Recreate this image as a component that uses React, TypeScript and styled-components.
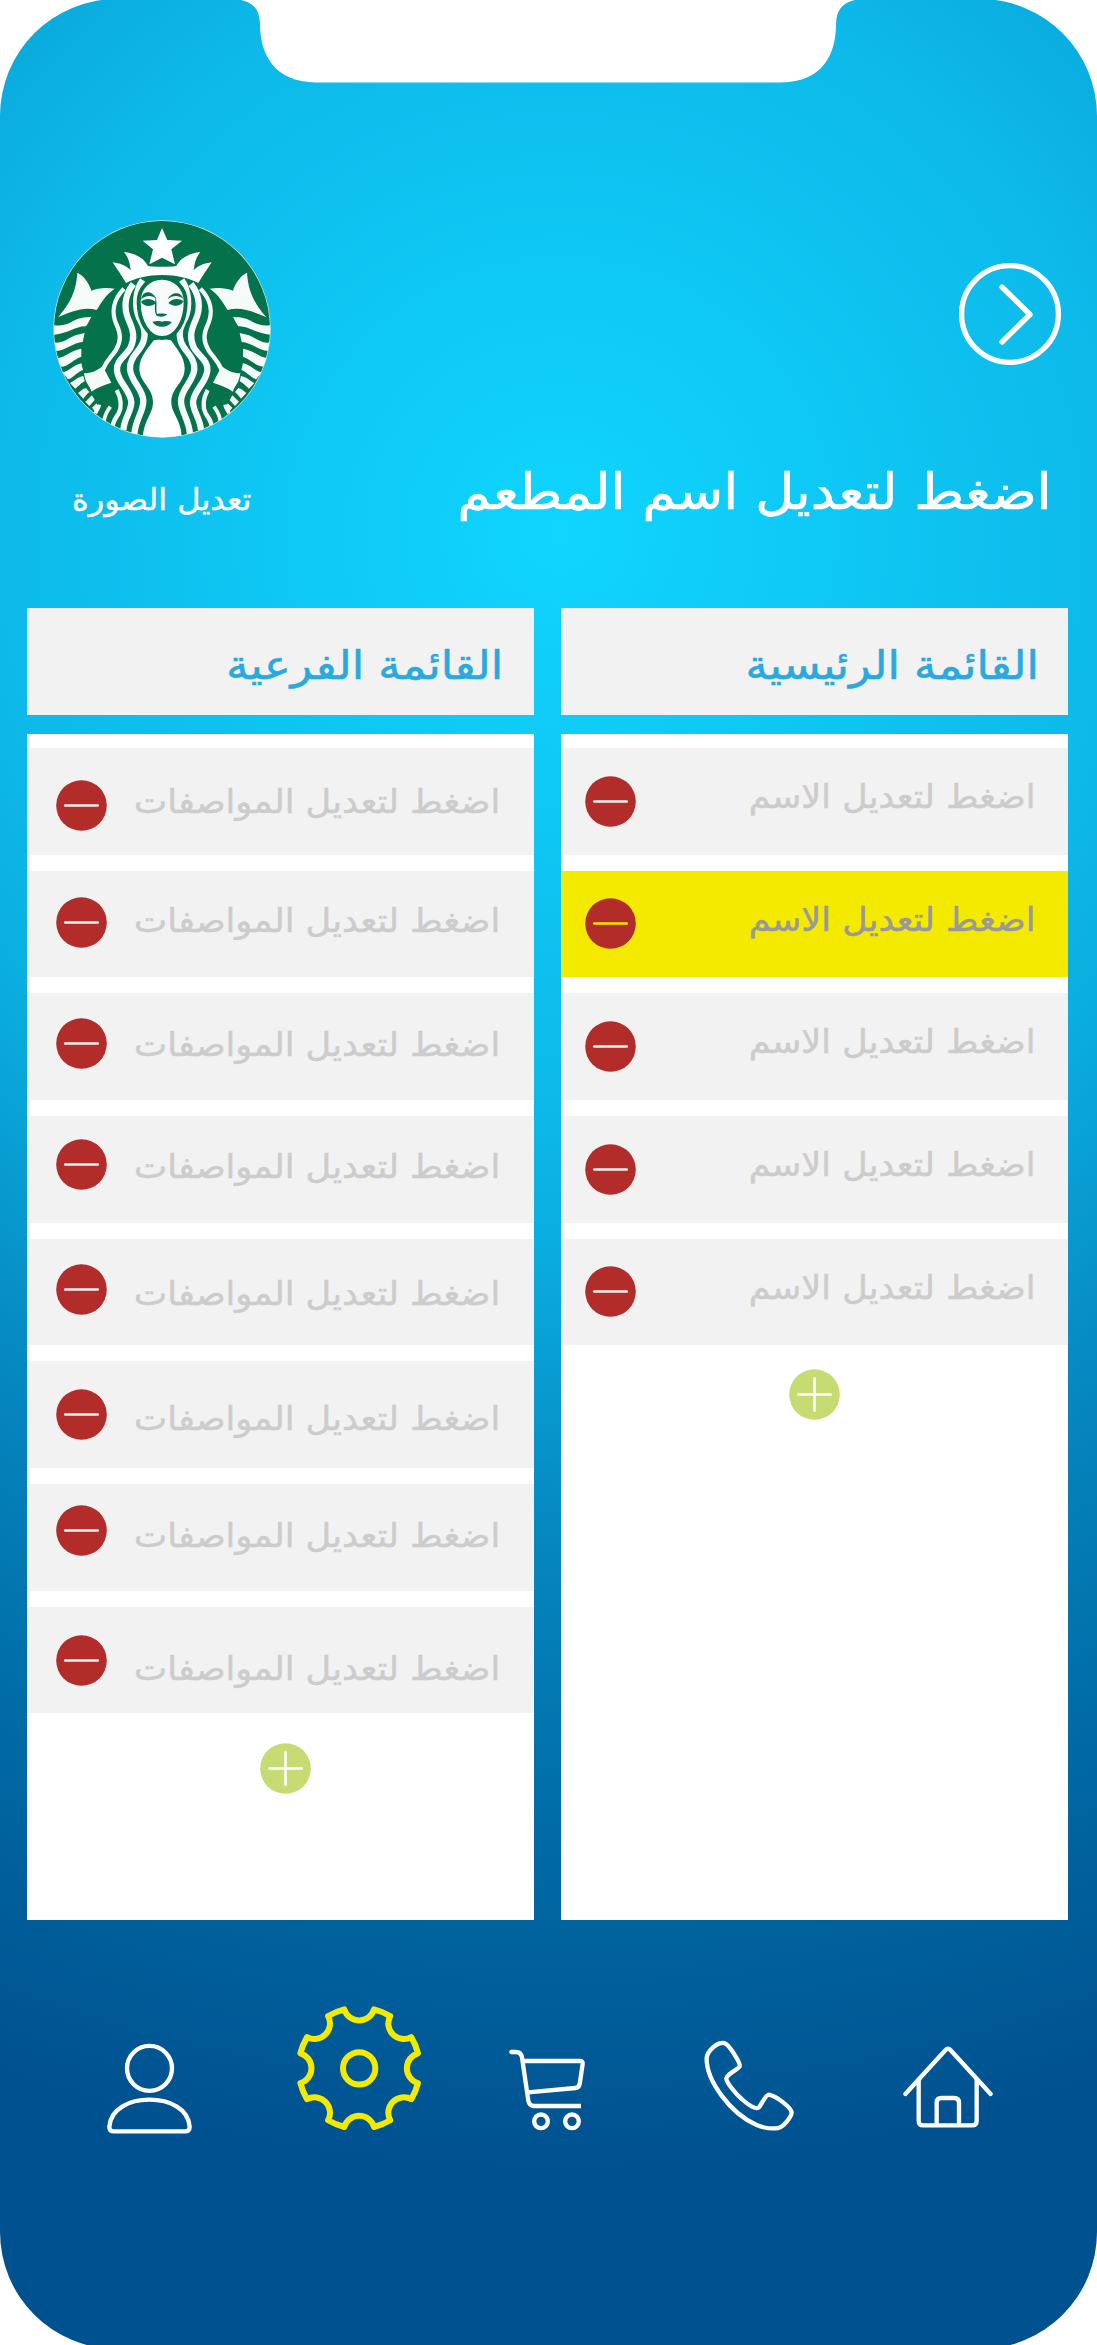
import React from "react";
import styled, { createGlobalStyle } from "styled-components";

const GlobalStyle = createGlobalStyle`
  *, *::before, *::after { box-sizing: border-box; }
  body { margin: 0; background: #fff; font-family: "DejaVu Sans", sans-serif; }
`;

const Screen = styled.main`
  width: 1097px;
  height: 2345px;
  overflow: hidden;
`;

const Phone = styled.div`
  position: relative;
  display: flex;
  flex-direction: column;
  width: 1097px;
  height: 2350px;
  margin-top: -1px;
  padding-top: 1px;
  border-radius: 117px;
  overflow: hidden;
  background: radial-gradient(
    circle 1640px at 560px 535px,
    #10d5ff 0%,
    #0db9e9 35%,
    #0aacde 44%,
    #0689c2 60%,
    #006aa4 80%,
    #00518f 100%
  );
`;

const Notch = styled.svg`
  position: absolute;
  top: 1px;
  left: 240px;
  width: 616px;
  height: 84px;
`;

const Header = styled.header`
  display: flex;
  justify-content: space-between;
  height: 608px;
  padding: 220px 36px 0 52px;
`;

const Profile = styled.div`
  display: flex;
  flex-direction: column;
  align-items: flex-end;
  width: 219px;
`;

const Heading = styled.div`
  display: flex;
  flex-direction: column;
  align-items: flex-end;
  padding-top: 43px;
`;

const TextBox = styled.div<{ $size: number; $right?: number; $top?: number; $color: string }>`
  direction: rtl;
  height: 60px;
  line-height: 60px;
  white-space: nowrap;
  font-size: ${(p) => p.$size}px;
  color: ${(p) => p.$color};
  -webkit-text-stroke: ${(p) => p.$size * 0.014}px ${(p) => p.$color};
  margin-right: ${(p) => p.$right ?? 0}px;
  margin-top: ${(p) => p.$top ?? 0}px;
`;

const Scaled = styled.span<{ $x: number }>`
  display: inline-block;
  transform: scaleX(${(p) => p.$x});
  transform-origin: right center;
`;

const Columns = styled.section`
  display: grid;
  grid-template-columns: 507px 507px;
  column-gap: 27px;
  padding-left: 27px;
`;

const Column = styled.div`
  display: flex;
  flex-direction: column;
  gap: 19px;
`;

const ColumnTitle = styled.h2`
  display: flex;
  justify-content: flex-end;
  height: 107px;
  margin: 0;
  font-weight: 400;
  background: #f2f2f2;
`;

const List = styled.div`
  display: flex;
  flex-direction: column;
  gap: 16.2px;
  height: 1185.5px;
  padding-top: 14px;
  background: #fff;
`;

const Row = styled.div<{ $active?: boolean }>`
  display: flex;
  justify-content: space-between;
  flex: none;
  height: 106.5px;
  background: ${(p) => (p.$active ? "#f4ea00" : "#f2f2f2")};
`;

const Badge = styled.svg<{ $left: number; $top: number }>`
  display: block;
  flex: none;
  width: 51px;
  height: 51px;
  margin: ${(p) => p.$top}px 0 0 ${(p) => p.$left}px;
`;

const Nav = styled.nav`
  display: flex;
  align-items: flex-start;
  padding: 85.5px 0 0 106px;
`;

const NavIcon = styled.svg<{ $w: number; $h: number; $top: number; $gap?: number; $active?: boolean }>`
  display: block;
  width: ${(p) => p.$w}px;
  height: ${(p) => p.$h}px;
  margin: ${(p) => p.$top}px ${(p) => p.$gap ?? 0}px 0 0;
  fill: none;
  stroke: ${(p) => (p.$active ? "#f4ea00" : "#fff")};
  stroke-width: ${(p) => (p.$active ? 18 : 13)};
  stroke-linejoin: round;
`;

type LabelProps = { text: string; size: number; x: number; color: string; right?: number; top?: number };

const Label = ({ text, size, x, color, right, top }: LabelProps) => (
  <TextBox $size={size} $color={color} $right={right} $top={top}>
    <Scaled $x={x}>{text}</Scaled>
  </TextBox>
);

const Minus = ({ left, top, line }: { left: number; top: number; line: string }) => (
  <Badge $left={left} $top={top} viewBox="0 0 51 51">
    <circle cx="25.5" cy="25.5" r="25.3" fill="#b22c2a" />
    <path d="M9.3 25.5H41.7" stroke={line} strokeWidth="2.6" strokeLinecap="round" />
  </Badge>
);

const Plus = ({ left, top }: { left: number; top: number }) => (
  <Badge $left={left} $top={top} viewBox="0 0 51 51">
    <circle cx="25.5" cy="25.5" r="25.3" fill="#c6dc73" />
    <path d="M9.3 25.5H41.7M25.5 9.3V41.7" stroke="#fff" strokeWidth="2.6" strokeLinecap="round" />
  </Badge>
);

const gearPath = () => {
  const cx = 837.5;
  const cy = 264.5;
  const at = (deg: number) => {
    const a = (deg * Math.PI) / 180;
    return `${(cx + 182 * Math.sin(a)).toFixed(1)} ${(cy - 182 * Math.cos(a)).toFixed(1)}`;
  };
  let d = `M${at(-14.2)}`;
  for (let k = 0; k < 8; k++) {
    d += `A46.5 46.5 0 0 0 ${at(k * 45 + 14.2)}A182 182 0 0 1 ${at(k * 45 + 30.8)}`;
  }
  return d + "Z";
};

const LogoHalf = () => (
  <g>
    <path fill="#fff" d="M216 157C236 160 256 165 270 181C268 160 262 140 250 126C282 130 308 142 322 168Q343 171 365 170V195C320 195 285 204 256 219C244 198 228 176 216 157Z" />
    <g fill="none" stroke="#f4fbf9" strokeWidth="19">
      <path d="M306 210C285 240 280 290 296 325C312 355 316 370 308 395C298 425 266 440 268 478C271 515 306 535 308 572C309 605 285 625 281 672" />
      <path d="M278 222C252 255 248 295 264 330C280 365 282 385 270 412C255 440 226 450 229 482C233 520 270 540 272 577C272 605 250 625 248 660" />
      <path strokeWidth="13" d="M250 236C216 270 212 310 228 345C242 375 240 395 226 420C212 442 198 450 186 480" />
      <path strokeWidth="13" d="M228 540C244 570 244 590 234 610C222 628 217 635 216 650" />
    </g>
    <path fill="none" stroke="#f4fbf9" strokeWidth="11" d="M209 590C202 600 192 612 190 634M176 584C174 596 168 600 164 610" />
    <g fill="#f4fbf9">
      <path d="M52 322C78 290 106 256 110 188C128 195 146 220 152 242C172 234 196 232 222 236C194 254 180 282 168 300C130 288 88 306 52 322Z" />
      <path d="M38 345C66 350 82 342 102 331C120 321 138 322 152 320C145 334 141 342 136 349C108 347 84 370 40 374Z" />
      <path d="M41 397C66 402 80 386 104 376L132 369L126 396C98 397 75 422 47 423Z" />
      <path d="M50 444C76 442 86 422 122 416V440C100 446 84 470 61 470Z" />
      <path d="M66 487C86 484 96 466 122 460L127 480C112 484 96 505 82 508Z" />
      <path d="M88 519C100 514 112 500 128 498L132 514C122 518 110 532 104 536Z" />
      <path d="M112 549C120 544 126 536 136 534L146 546C138 552 132 562 128 566Z" />
      <path d="M130 490C152 490 170 482 186 468L212 518C192 524 170 532 152 545C148 528 134 522 130 490Z" />
      <path d="M134 575L154 556L162 570L146 588Z" />
      <path d="M154 593L168 580L174 596L164 606Z" />
    </g>
  </g>
);

const LogoSvg = styled.svg`
  display: block;
  width: 218px;
  height: 218px;
`;

const Logo = () => (
  <LogoSvg viewBox="37 30 654 654">
    <clipPath id="disc"><circle cx="364" cy="357" r="325" /></clipPath>
    <circle cx="364" cy="357" r="326" fill="#d7e2cf" />
    <g clipPath="url(#disc)">
      <circle cx="364" cy="357" r="324" fill="#04724a" />
      <LogoHalf />
      <g transform="translate(729 0) scale(-1 1)"><LogoHalf /></g>
      <path fill="#04724a" d="M327 169Q344 148 365 148Q385 148 400 169Q364 166 327 169Z" />
      <path fill="#fff" d="M364 54L380 90L424 92L392 118L403 163L364 143L326 163L337 118L306 92L349 90Z" />
      <path fill="#fff" d="M338 392C348 386 384 386 392 392C405 412 432 440 432 475C432 520 392 532 392 577C392 612 425 630 423 690H306C308 630 337 612 337 577C337 532 296 518 296 475C296 440 325 412 338 392Z" />
      <path fill="#f7fcfa" stroke="#04724a" strokeWidth="12" d="M364 203C326 203 294 232 294 276C294 334 323 384 364 384C407 384 435 334 435 276C435 232 402 203 364 203Z" />
      <g fill="#04724a">
        <path d="M301 268C306 242 334 238 348 268C334 255 318 255 301 268Z" />
        <path d="M381 268C394 242 422 246 428 266C414 256 396 255 381 268Z" />
        <path d="M301 276C314 262 336 266 347 279C332 291 312 292 301 276Z" />
        <path d="M383 279C394 266 412 262 429 274C418 291 398 291 383 279Z" />
        <path d="M345 262C350 280 345 300 349 312C357 310 371 310 380 313C374 321 354 323 347 316C340 304 343 280 345 262Z" />
        <path d="M335 335C346 335 354 331 364 335C374 331 382 335 393 335C384 354 346 356 335 335Z" />
      </g>
    </g>
  </LogoSvg>
);

const BackButton = styled.svg`
  display: block;
  width: 102px;
  height: 102px;
  fill: none;
  stroke: #fff;
  stroke-width: 5.3;
  stroke-linecap: round;
  stroke-linejoin: round;
`;

const FIRST_ROW = 748;
const ROW_PITCH = 122.7;

const mainItems = [0, 1, 2, 3, 4];
const subItems = [
  { badge: 805.3, base: 814 },
  { badge: 922.7, base: 933 },
  { badge: 1044, base: 1057.5 },
  { badge: 1165, base: 1179 },
  { badge: 1289.5, base: 1306 },
  { badge: 1414.5, base: 1431.5 },
  { badge: 1530.5, base: 1548 },
  { badge: 1660.3, base: 1680.7 },
];

export default function App() {
  return (
    <Screen>
      <GlobalStyle />
      <Phone>
        <Notch viewBox="240 0 616 84">
          <path fill="#fff" d="M241 0C254 3 259.500 10 260 24C260 54 274 82 316 82.500H781C823 82 836 54 836 24C836.500 10 842 3 855 0Z" />
        </Notch>
        <Header>
          <Profile>
            <Logo />
            <Label text="تعديل الصورة" size={30} x={1.065} color="#fff" right={20} top={32} />
          </Profile>
          <Heading>
            <BackButton viewBox="0 0 102 102">
              <circle cx="51" cy="51" r="48.4" />
              <path d="M43 24L71 51.500L43 79" />
            </BackButton>
            <Label text="اضغط لتعديل اسم المطعم" size={50} x={1.073} color="#fff" right={9} top={97} />
          </Heading>
        </Header>
        <Columns>
          <Column>
            <ColumnTitle><Label text="القائمة الفرعية" size={40} x={1.12} color="#29a9e1" right={31} top={27} /></ColumnTitle>
            <List>
              {subItems.map((it, k) => {
                const y = FIRST_ROW + ROW_PITCH * k;
                return (
                  <Row key={k}>
                    <Minus left={29} top={it.badge - y - 25.5} line="#f2f2f2" />
                    <Label text="اضغط لتعديل المواصفات" size={33} x={1.067} color="#ccc" right={34} top={it.base - y - 42} />
                  </Row>
                );
              })}
              <Plus left={233} top={13.5} />
            </List>
          </Column>
          <Column>
            <ColumnTitle><Label text="القائمة الرئيسية" size={40} x={1.12} color="#29a9e1" right={29} top={27} /></ColumnTitle>
            <List>
              {mainItems.map((k) => (
                <Row key={k} $active={k === 1}>
                  <Minus left={24} top={27.5} line={k === 1 ? "#f4ea00" : "#f2f2f2"} />
                  <Label text="اضغط لتعديل الاسم" size={33} x={1.06} color={k === 1 ? "#999" : "#ccc"} right={33} top={19} />
                </Row>
              ))}
              <Plus left={228} top={8} />
            </List>
          </Column>
        </Columns>
        <Nav>
          <NavIcon $w={88} $h={93} $top={37} $gap={102} viewBox="78 186 264 279">
            <circle cx="208.5" cy="265" r="67.5" />
            <path d="M102 454Q88 454 88 440C92 385 150 359 208 359C268 359 325 385 329 440Q329 454 315 454Z" />
          </NavIcon>
          <NavIcon $w={126} $h={127} $top={0} $gap={86} $active viewBox="648 75 378 381">
            <path d={gearPath()} />
            <circle cx="837.5" cy="265" r="48.5" />
          </NavIcon>
          <NavIcon $w={79} $h={84} $top={43} $gap={115} viewBox="24 204 237 252">
            <path strokeLinecap="round" d="M34 216H48Q63 216 66 232L85 362Q88 378 102 378" />
            <path d="M102 378H243M68 243H240Q249 243 248 252L239 312Q237 323 226 324L84 337" />
            <circle cx="123" cy="424" r="20.500" />
            <circle cx="216" cy="424" r="20.500" />
          </NavIcon>
          <NavIcon $w={93} $h={93} $top={34} $gap={107} viewBox="606 177 279 279">
            <path d="M665 189C650 190 622 212 620 234C618 300 690 400 770 435C800 447 815 447 835 444C850 440 874 412 875 397C872 382 830 348 806 344C798 344 786 370 778 381C770 392 745 375 725 357C705 340 678 305 679 295C680 282 715 268 719 259C722 248 690 200 678 192Q672 188 665 189Z" />
          </NavIcon>
          <NavIcon $w={92} $h={84} $top={40} viewBox="1206 195 276 252">
            <path strokeLinecap="round" d="M1216 342L1336 211Q1344 201 1352 211L1472 342" />
            <path d="M1256 298V422Q1256 436 1270 436H1416Q1430 436 1430 422V298M1310 436V368Q1310 354 1324 354H1362Q1377 354 1377 368V436" />
          </NavIcon>
        </Nav>
      </Phone>
    </Screen>
  );
}
